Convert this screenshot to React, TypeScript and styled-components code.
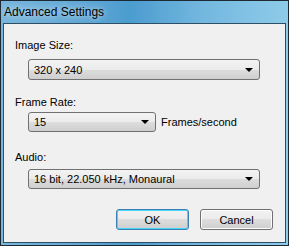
import React from 'react';
import styled, { createGlobalStyle } from 'styled-components';

const Global = createGlobalStyle`
    html, body {
        margin: 0;
        padding: 0;
        background: #fff;
    }
`;

const Window = styled.div`
    box-sizing: border-box;
    width: 289px;
    height: 246px;
    border: 1px solid #1d2a33;
    padding: 0 2px 2px;
    display: flex;
    flex-direction: column;
    background: linear-gradient(90deg, #79b6dc 0%, #5fa6d4 30%, #4b9ccf 45%, #73b7df 70%, #8ecbe9 100%);
    font-family: "Liberation Sans", Arial, sans-serif;
`;

const TitleBar = styled.div`
    height: 22px;
    display: flex;
    align-items: center;
    padding-left: 1px;
    font-size: 12px;
    color: #000;
    text-shadow: 0 0 6px rgba(255, 255, 255, 0.9);
`;

const Client = styled.div`
    flex: 1;
    border: 1px solid #2e4f66;
    background: #f0f0f0;
    padding: 15px 24px 0 11px;
    font-size: 11px;
    color: #000;
`;

const Label = styled.div<{ $top: number }>`
    height: 13px;
    line-height: 13px;
    margin-top: ${p => p.$top}px;
`;

const Field = styled.div<{ $top: number }>`
    display: flex;
    align-items: center;
    gap: 5px;
    margin: ${p => p.$top}px 0 0 13px;
`;

const Combo = styled.div<{ $width: number; $height: number }>`
    box-sizing: border-box;
    width: ${p => p.$width}px;
    height: ${p => p.$height}px;
    border: 1px solid #707070;
    border-radius: 3px;
    background: linear-gradient(#f3f3f3 0%, #ebebeb 50%, #dddddd 50%, #cfcfcf 100%);
    display: flex;
    align-items: center;
    padding: 0 6px 0 5px;
`;

const ComboText = styled.span`
    flex: 1;
`;

const Arrow = styled.span`
    width: 0;
    height: 0;
    border-left: 4px solid transparent;
    border-right: 4px solid transparent;
    border-top: 4px solid #000;
`;

const Buttons = styled.div`
    display: flex;
    justify-content: flex-end;
    gap: 11px;
    margin-right: -12px;
    margin-top: 20px;
`;

const Button = styled.button<{ $primary?: boolean }>`
    box-sizing: border-box;
    width: 73px;
    height: 21px;
    padding: 0;
    font-family: "Liberation Sans", Arial, sans-serif;
    font-size: 11px;
    color: #000;
    border-radius: 3px;
    border: 1px solid ${p => (p.$primary ? '#3c7fb1' : '#707070')};
    box-shadow: ${p => (p.$primary ? 'inset 0 0 0 1px #48d3fb' : 'inset 0 0 0 1px #fcfcfc')};
    background: linear-gradient(#f2f2f2 0%, #ebebeb 50%, #dddddd 50%, #cfcfcf 100%);
`;

type Setting = {
    label: string;
    value: string;
    width: number;
    height: number;
    suffix?: string;
    labelTop: number;
    fieldTop: number;
};

const settings: Setting[] = [
    { label: 'Image Size:', value: '320 x 240', width: 232, height: 21, labelTop: 0, fieldTop: 7 },
    { label: 'Frame Rate:', value: '15', width: 128, height: 20, suffix: 'Frames/second', labelTop: 16, fieldTop: 3 },
    { label: 'Audio:', value: '16 bit, 22.050 kHz, Monaural', width: 232, height: 20, labelTop: 19, fieldTop: 5 },
];

export default function App() {
    return (
        <>
            <Global />
            <Window>
                <TitleBar>Advanced Settings</TitleBar>
                <Client>
                    {settings.map(s => (
                        <div key={s.label}>
                            <Label $top={s.labelTop}>{s.label}</Label>
                            <Field $top={s.fieldTop}>
                                <Combo $width={s.width} $height={s.height}>
                                    <ComboText>{s.value}</ComboText>
                                    <Arrow />
                                </Combo>
                                {s.suffix && <span>{s.suffix}</span>}
                            </Field>
                        </div>
                    ))}
                    <Buttons>
                        <Button $primary>OK</Button>
                        <Button>Cancel</Button>
                    </Buttons>
                </Client>
            </Window>
        </>
    );
}
